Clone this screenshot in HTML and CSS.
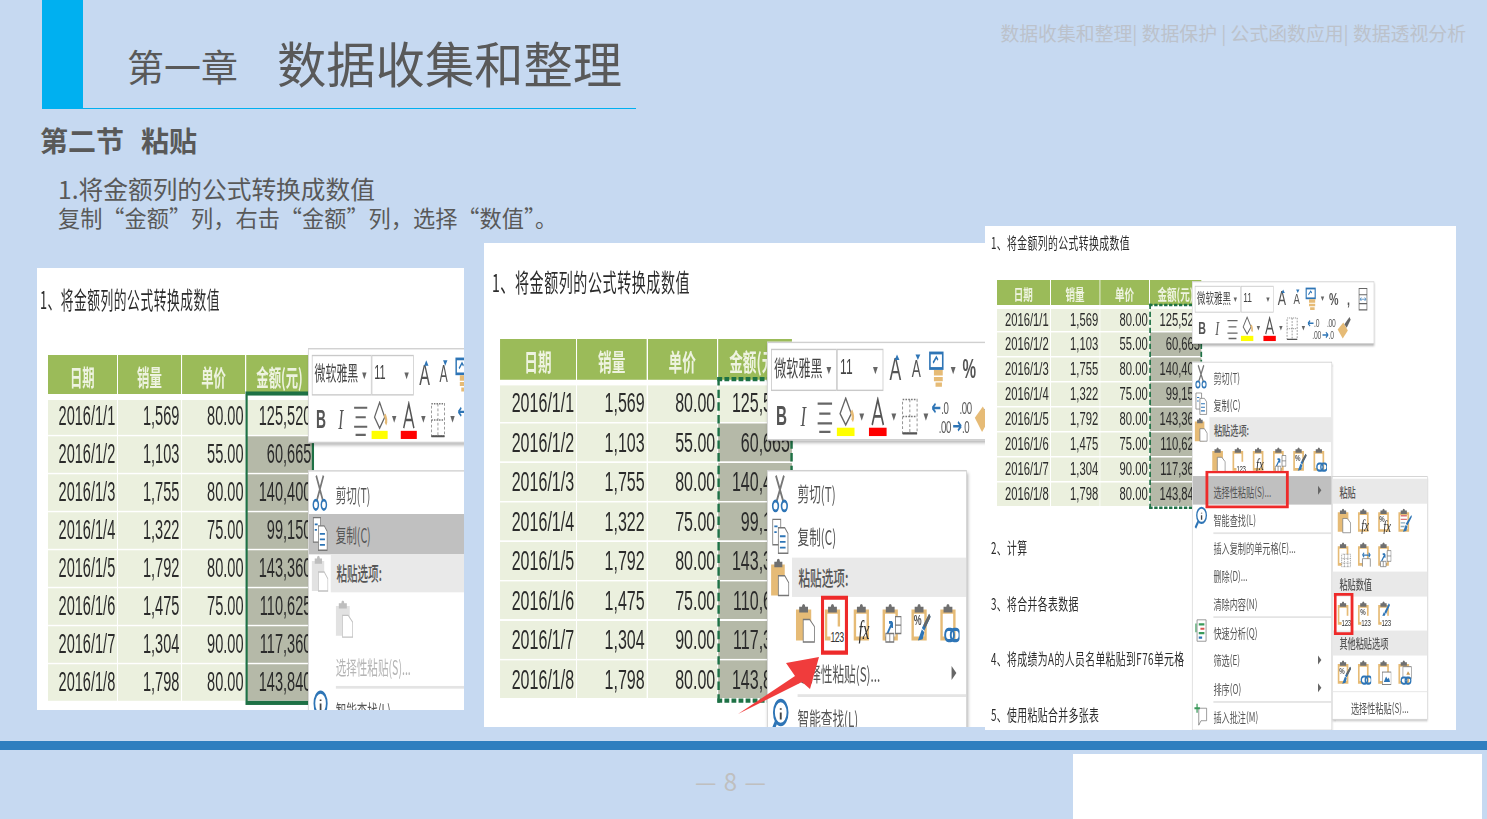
FILE: index.html
```html
<!DOCTYPE html>
<html lang="zh-CN">

<head>
    <meta charset="UTF-8">
    <meta name="viewport" content="width=device-width, initial-scale=1.0">
    <title>第一章 数据收集和整理</title>
    <link rel="stylesheet" href="styles.css">
</head>

<body>
    <svg class="defs" aria-hidden="true">
        <symbol id="p-clip" viewBox="0 0 25 29"><path d="M5 3h3.5a2 2 0 0 1 4 0H16v4H5z" fill="#6f6f6f"/></symbol>
        <symbol id="p-open" viewBox="0 0 25 29"><path fill-rule="evenodd" d="M1 5h19v22H1zM4 8v16h13V8z" fill="#e6bb76"/><use href="#p-clip"/></symbol>
        <symbol id="p-page" viewBox="0 0 25 29"><path d="M1 5h19v22H1z" fill="#e6bb76"/><use href="#p-clip"/><path d="M10 12h8l6 5v11H10z" fill="#fff" stroke="#777"/></symbol>
        <symbol id="p-123" viewBox="0 0 25 29"><use href="#p-open"/><rect x="8" y="17" width="17" height="12" fill="#fff"/><text x="8" y="28" class="ico-num">123</text></symbol>
        <symbol id="p-fx" viewBox="0 0 25 29"><use href="#p-open"/><text x="7" y="26" class="ico-fx">fx</text></symbol>
        <symbol id="p-swap" viewBox="0 0 25 29"><use href="#p-open"/><path d="M7 22l6-8M13 14h-4M13 14v4" stroke="#2e75b6" stroke-width="2" fill="none"/><path d="M17 10h7v12h-7zM17 16h7M5 22h10v6H5zM10 22v6" fill="#fff" stroke="#777"/></symbol>
        <symbol id="p-brush" viewBox="0 0 25 29"><use href="#p-open"/><text x="4" y="16" class="ico-pc">%</text><path d="M23 8l2 2-8 10-3-2zM14 19l3 2-2 5-6 1z" fill="#2e75b6"/><path d="M23 8l2 2-7 8-2-2z" fill="#666"/></symbol>
        <symbol id="p-link" viewBox="0 0 25 29"><use href="#p-open"/><rect x="7" y="19" width="11" height="8" rx="4" fill="#fff" stroke="#2e75b6" stroke-width="2.4"/><rect x="14" y="19" width="11" height="8" rx="4" fill="none" stroke="#2e75b6" stroke-width="2.4"/></symbol>
        <symbol id="p-pcfx" viewBox="0 0 25 29"><use href="#p-open"/><text x="3" y="16" class="ico-pc">%</text><text x="10" y="27" class="ico-fx">fx</text></symbol>
        <symbol id="p-format" viewBox="0 0 25 29"><use href="#p-open"/><path d="M5 9h11M5 13h11" stroke="#d77" stroke-width="1.5"/><path d="M5 17h8M5 21h7" stroke="#8ab" stroke-width="1.5"/><path d="M24 8l1 2-8 10-3-2zM14 19l3 2-2 5-6 1z" fill="#2e75b6"/></symbol>
        <symbol id="p-grid" viewBox="0 0 25 29"><use href="#p-open"/><path d="M8 14h16v14H8zM8 19h16M8 24h16M13 14v14M19 14v14" fill="#fff" stroke="#888" stroke-dasharray="1.5 1"/></symbol>
        <symbol id="p-width" viewBox="0 0 25 29"><use href="#p-open"/><path d="M9 28V19h14v9" fill="#fff" stroke="#777"/><path d="M9 15h14M9 15l3-2.5M9 15l3 2.5M23 15l-3-2.5M23 15l-3 2.5" stroke="#2e75b6" stroke-width="1.5" fill="none"/></symbol>
        <symbol id="p-pc123" viewBox="0 0 25 29"><use href="#p-open"/><text x="5" y="16" class="ico-pc">%</text><rect x="7" y="17" width="18" height="12" fill="#fff"/><text x="7" y="28" class="ico-num">123</text></symbol>
        <symbol id="p-br123" viewBox="0 0 25 29"><use href="#p-open"/><path d="M20 3l2 2-7 10-3-2zM11 13l3 2-2 3-5 1z" fill="#2e75b6"/><rect x="7" y="17" width="18" height="12" fill="#fff"/><text x="7" y="28" class="ico-num">123</text></symbol>
        <symbol id="p-pic" viewBox="0 0 25 29"><use href="#p-open"/><rect x="9" y="14" width="15" height="14" fill="#fff" stroke="#777"/><path d="M11 25l4-6 3 3 2-2 2 5z" fill="#2e75b6"/></symbol>
        <symbol id="p-piclink" viewBox="0 0 25 29"><use href="#p-open"/><rect x="9" y="8" width="15" height="13" fill="#fff" stroke="#777"/><path d="M15 17l3-4 4 4z" fill="#c79a55"/><rect x="6" y="20" width="10" height="7" rx="3.5" fill="#fff" stroke="#2e75b6" stroke-width="2.2"/><rect x="13" y="20" width="10" height="7" rx="3.5" fill="none" stroke="#2e75b6" stroke-width="2.2"/></symbol>

        <symbol id="m-cut" viewBox="0 0 24 28"><path d="M7 1l9 18M17 1L8 19" stroke="#777" stroke-width="2.2"/><circle cx="6.5" cy="22.5" r="3.5" fill="none" stroke="#2e75b6" stroke-width="2"/><circle cx="17.5" cy="22.5" r="3.5" fill="none" stroke="#2e75b6" stroke-width="2"/></symbol>
        <symbol id="m-copy" viewBox="0 0 24 28"><path d="M3 2h10v18H3z" fill="#fff" stroke="#777"/><path d="M10 8h8l4 4v14H10z" fill="#fff" stroke="#777"/><path d="M12 14h7M12 18h7M12 22h7M5 7h4M5 11h3" stroke="#2e75b6" stroke-width="1.3"/></symbol>
        <symbol id="m-paste" viewBox="0 0 24 28"><path d="M1 5h17v22H1z" fill="#e6bb76"/><path d="M5 3h3a2 2 0 0 1 4 0h3v4H5z" fill="#6f6f6f"/><path d="M10 13h8l5 5v9H10z" fill="#fff" stroke="#777"/></symbol>
        <symbol id="m-find" viewBox="0 0 24 28"><circle cx="13" cy="11" r="8.5" fill="#fff" stroke="#2e75b6" stroke-width="2.4"/><path d="M7 18l-5 7" stroke="#2e75b6" stroke-width="3.4"/><path d="M13 8v1M13 11v5" stroke="#444" stroke-width="2.4"/></symbol>
        <symbol id="m-quick" viewBox="0 0 24 28"><path d="M5 2h16v24H5z" fill="#fff" stroke="#777"/><path d="M8 7h10" stroke="#3a9a5b" stroke-width="2.5"/><path d="M11 12h7" stroke="#d9534f" stroke-width="2.5"/><path d="M8 17h10" stroke="#3a9a5b" stroke-width="2.5"/><path d="M8 22h6" stroke="#2e75b6" stroke-width="2.5"/><path d="M3 6v10" stroke="#3a9a5b" stroke-width="2"/></symbol>
        <symbol id="m-note" viewBox="0 0 24 28"><path d="M8 6h14v14H12l-4 5z" fill="#fff" stroke="#777"/><path d="M5 1v10M0 6h10" stroke="#3a9a5b" stroke-width="2.2"/></symbol>

        <symbol id="t-grow" viewBox="0 0 24 26"><path d="M15 3l3 4h-6z" fill="#2e75b6"/></symbol>
        <symbol id="t-shrink" viewBox="0 0 24 26"><path d="M12 3h6l-3 4z" fill="#2e75b6"/></symbol>
        <symbol id="t-cond" viewBox="0 0 26 28"><rect x="4" y="2" width="16" height="11" fill="#fff" stroke="#2e75b6" stroke-width="2"/><path d="M8 9l4-4 2 2" stroke="#2e75b6" stroke-width="1.6" fill="none"/><path d="M9 14h11v4H9zM9 19h11v3H9zM11 23h8v3h-8z" fill="#e6bb76"/></symbol>
        <symbol id="t-width" viewBox="0 0 26 28"><path d="M6 2h14v24H6zM6 9h14M6 19h14" fill="#fff" stroke="#666" stroke-width="1.3"/><path d="M8 14h10M8 14l2-2M8 14l2 2M18 14l-2-2M18 14l-2 2" stroke="#2e75b6" fill="none"/></symbol>
        <symbol id="t-align" viewBox="0 0 26 28"><path d="M4 5h18M6 12h14M4 19h18M6 25h14" stroke="#666" stroke-width="1.6"/></symbol>
        <symbol id="t-fill" viewBox="0 0 26 28"><path d="M13 1l7 11-7 8-7-8z" fill="#fff" stroke="#666" stroke-width="1.5"/><path d="M20 10c2 3 3 5 1 7" stroke="#e6bb76" stroke-width="3" fill="none"/><rect x="2" y="22" width="22" height="6" fill="#ffff00"/></symbol>
        <symbol id="t-color" viewBox="0 0 26 28"><path d="M6 20L13 2l7 18M8 14h10" stroke="#555" stroke-width="2" fill="none"/><rect x="2" y="22" width="22" height="6" fill="#ff0000"/></symbol>
        <symbol id="t-border" viewBox="0 0 26 28"><path d="M4 2h18v24H4zM4 14h18M13 2v24" fill="none" stroke="#777" stroke-dasharray="2 1.5"/><path d="M4 26h18" stroke="#555" stroke-width="1.5"/></symbol>
        <symbol id="t-dec-up" viewBox="0 0 26 28"><text x="12" y="12" class="ico-dec">.0</text><text x="9" y="26" class="ico-dec">.00</text><path d="M1 8h10M1 8l4-3M1 8l4 3" stroke="#2e75b6" stroke-width="1.7" fill="none"/></symbol>
        <symbol id="t-dec-down" viewBox="0 0 26 28"><text x="9" y="12" class="ico-dec">.00</text><text x="12" y="26" class="ico-dec">.0</text><path d="M1 21h10M11 21l-4-3M11 21l-4 3" stroke="#2e75b6" stroke-width="1.7" fill="none"/></symbol>
        <symbol id="t-brush" viewBox="0 0 26 28"><path d="M2 15l10-8 8 9-9 9z" fill="#e6bb76"/><path d="M14 9l9-8 2 3-7 9z" fill="#666"/></symbol>
    </svg>

    <div class="slide">
        <header class="top">
            <div class="top-row">
                <div class="chapter">
                    <span class="chapter-no">第一章</span>
                    <h1>数据收集和整理</h1>
                </div>
                <nav class="nav">数据收集和整理| 数据保护 | 公式函数应用| 数据透视分析</nav>
            </div>
            <h2>第二节<span class="topic">粘贴</span></h2>
            <p class="lead">1.将金额列的公式转换成数值</p>
            <p class="sub">复制“金额”列，右击“金额”列，选择“数值”。</p>
        </header>

        <section class="shots">
            <!-- first capture: solid border, copy hovered, paste disabled -->
            <div class="shot shot-a">
                <div class="canvas">
                    <div class="sheet-title">1、将金额列的公式转换成数值</div>
                    <div class="sheet">
                        <table>
                            <thead><tr><th>日期</th><th>销量</th><th>单价</th><th>金额(元)</th></tr></thead>
                            <tbody>
                                <tr><td>2016/1/1</td><td>1,569</td><td>80.00</td><td class="first">125,520</td></tr>
                                <tr><td>2016/1/2</td><td>1,103</td><td>55.00</td><td>60,665</td></tr>
                                <tr><td>2016/1/3</td><td>1,755</td><td>80.00</td><td>140,400</td></tr>
                                <tr><td>2016/1/4</td><td>1,322</td><td>75.00</td><td>99,150</td></tr>
                                <tr><td>2016/1/5</td><td>1,792</td><td>80.00</td><td>143,360</td></tr>
                                <tr><td>2016/1/6</td><td>1,475</td><td>75.00</td><td>110,625</td></tr>
                                <tr><td>2016/1/7</td><td>1,304</td><td>90.00</td><td>117,360</td></tr>
                                <tr><td>2016/1/8</td><td>1,798</td><td>80.00</td><td>143,840</td></tr>
                            </tbody>
                        </table>
                        <div class="marquee solid"></div>
                    </div>
                    <div class="toolbar">
                        <div class="tb-row">
                            <div class="combo font">微软雅黑<i class="caret"></i></div>
                            <div class="combo size">11<i class="caret"></i></div>
                            <span class="tb big">A<svg><use href="#t-grow"/></svg></span>
                            <span class="tb small">A<svg><use href="#t-shrink"/></svg></span>
                            <svg class="tb-ico"><use href="#t-cond"/></svg><i class="caret"></i>
                            <span class="tb pc">%</span><span class="tb pc">,</span>
                            <svg class="tb-ico"><use href="#t-width"/></svg>
                        </div>
                        <div class="tb-row">
                            <b class="tb bold">B</b><i class="tb ital">I</i>
                            <svg class="tb-ico"><use href="#t-align"/></svg>
                            <svg class="tb-ico"><use href="#t-fill"/></svg><i class="caret"></i>
                            <svg class="tb-ico"><use href="#t-color"/></svg><i class="caret"></i>
                            <svg class="tb-ico"><use href="#t-border"/></svg><i class="caret"></i>
                            <svg class="tb-ico"><use href="#t-dec-up"/></svg>
                            <svg class="tb-ico"><use href="#t-dec-down"/></svg>
                            <svg class="tb-ico"><use href="#t-brush"/></svg>
                        </div>
                    </div>
                    <div class="menu off-paste">
                        <div class="item"><svg class="m-ico"><use href="#m-cut"/></svg>剪切(T)</div>
                        <div class="item hover"><svg class="m-ico"><use href="#m-copy"/></svg>复制(C)</div>
                        <div class="label"><svg class="m-ico"><use href="#m-paste"/></svg><span>粘贴选项:</span></div>
                        <div class="icons"><svg class="p"><use href="#p-page"/></svg></div>
                        <div class="item special">选择性粘贴(S)...</div>
                        <div class="item low sep"><svg class="m-ico"><use href="#m-find"/></svg>智能查找(L)</div>
                    </div>
                </div>
            </div>

            <!-- second capture: paste values marked with an arrow -->
            <div class="shot shot-b">
                <div class="canvas">
                    <div class="sheet-title">1、将金额列的公式转换成数值</div>
                    <div class="sheet">
                        <table>
                            <thead><tr><th>日期</th><th>销量</th><th>单价</th><th>金额(元)</th></tr></thead>
                            <tbody>
                                <tr><td>2016/1/1</td><td>1,569</td><td>80.00</td><td class="first">125,520</td></tr>
                                <tr><td>2016/1/2</td><td>1,103</td><td>55.00</td><td>60,665</td></tr>
                                <tr><td>2016/1/3</td><td>1,755</td><td>80.00</td><td>140,400</td></tr>
                                <tr><td>2016/1/4</td><td>1,322</td><td>75.00</td><td>99,150</td></tr>
                                <tr><td>2016/1/5</td><td>1,792</td><td>80.00</td><td>143,360</td></tr>
                                <tr><td>2016/1/6</td><td>1,475</td><td>75.00</td><td>110,625</td></tr>
                                <tr><td>2016/1/7</td><td>1,304</td><td>90.00</td><td>117,360</td></tr>
                                <tr><td>2016/1/8</td><td>1,798</td><td>80.00</td><td>143,840</td></tr>
                            </tbody>
                        </table>
                        <div class="marquee"></div>
                    </div>
                    <div class="toolbar">
                        <div class="tb-row">
                            <div class="combo font">微软雅黑<i class="caret"></i></div>
                            <div class="combo size">11<i class="caret"></i></div>
                            <span class="tb big">A<svg><use href="#t-grow"/></svg></span>
                            <span class="tb small">A<svg><use href="#t-shrink"/></svg></span>
                            <svg class="tb-ico"><use href="#t-cond"/></svg><i class="caret"></i>
                            <span class="tb pc">%</span><span class="tb pc">,</span>
                            <svg class="tb-ico"><use href="#t-width"/></svg>
                        </div>
                        <div class="tb-row">
                            <b class="tb bold">B</b><i class="tb ital">I</i>
                            <svg class="tb-ico"><use href="#t-align"/></svg>
                            <svg class="tb-ico"><use href="#t-fill"/></svg><i class="caret"></i>
                            <svg class="tb-ico"><use href="#t-color"/></svg><i class="caret"></i>
                            <svg class="tb-ico"><use href="#t-border"/></svg><i class="caret"></i>
                            <svg class="tb-ico"><use href="#t-dec-up"/></svg>
                            <svg class="tb-ico"><use href="#t-dec-down"/></svg>
                            <svg class="tb-ico"><use href="#t-brush"/></svg>
                        </div>
                    </div>
                    <div class="menu">
                        <div class="item"><svg class="m-ico"><use href="#m-cut"/></svg>剪切(T)</div>
                        <div class="item"><svg class="m-ico"><use href="#m-copy"/></svg>复制(C)</div>
                        <div class="label"><svg class="m-ico"><use href="#m-paste"/></svg><span>粘贴选项:</span></div>
                        <div class="icons">
                            <svg class="p"><use href="#p-page"/></svg>
                            <span class="marked"><svg class="p"><use href="#p-123"/></svg></span>
                            <svg class="p"><use href="#p-fx"/></svg>
                            <svg class="p"><use href="#p-swap"/></svg>
                            <svg class="p"><use href="#p-brush"/></svg>
                            <svg class="p"><use href="#p-link"/></svg>
                        </div>
                        <div class="item special">选择性粘贴(S)...<i class="arrow-r"></i></div>
                        <div class="item low sep"><svg class="m-ico"><use href="#m-find"/></svg>智能查找(L)</div>
                    </div>
                </div>
                <svg class="red-arrow" viewBox="0 0 82 60"><path d="M0 59L57 21 48 8 81 2 72 34 64 27z"/></svg>
            </div>

            <!-- third capture: full menu with the paste special submenu -->
            <div class="shot shot-c">
                <div class="canvas">
                    <div class="sheet-title">1、将金额列的公式转换成数值</div>
                    <div class="sheet">
                        <table>
                            <thead><tr><th>日期</th><th>销量</th><th>单价</th><th>金额(元)</th></tr></thead>
                            <tbody>
                                <tr><td>2016/1/1</td><td>1,569</td><td>80.00</td><td class="first">125,520</td></tr>
                                <tr><td>2016/1/2</td><td>1,103</td><td>55.00</td><td>60,665</td></tr>
                                <tr><td>2016/1/3</td><td>1,755</td><td>80.00</td><td>140,400</td></tr>
                                <tr><td>2016/1/4</td><td>1,322</td><td>75.00</td><td>99,150</td></tr>
                                <tr><td>2016/1/5</td><td>1,792</td><td>80.00</td><td>143,360</td></tr>
                                <tr><td>2016/1/6</td><td>1,475</td><td>75.00</td><td>110,625</td></tr>
                                <tr><td>2016/1/7</td><td>1,304</td><td>90.00</td><td>117,360</td></tr>
                                <tr><td>2016/1/8</td><td>1,798</td><td>80.00</td><td>143,840</td></tr>
                            </tbody>
                        </table>
                        <div class="marquee"></div>
                    </div>
                    <ul class="steps">
                        <li>2、计算</li>
                        <li>3、将合并各表数据</li>
                        <li>4、将成绩为A的人员名单粘贴到F76单元格</li>
                        <li>5、使用粘贴合并多张表</li>
                    </ul>
                    <div class="toolbar">
                        <div class="tb-row">
                            <div class="combo font">微软雅黑<i class="caret"></i></div>
                            <div class="combo size">11<i class="caret"></i></div>
                            <span class="tb big">A<svg><use href="#t-grow"/></svg></span>
                            <span class="tb small">A<svg><use href="#t-shrink"/></svg></span>
                            <svg class="tb-ico"><use href="#t-cond"/></svg><i class="caret"></i>
                            <span class="tb pc">%</span><span class="tb pc">,</span>
                            <svg class="tb-ico"><use href="#t-width"/></svg>
                        </div>
                        <div class="tb-row">
                            <b class="tb bold">B</b><i class="tb ital">I</i>
                            <svg class="tb-ico"><use href="#t-align"/></svg>
                            <svg class="tb-ico"><use href="#t-fill"/></svg><i class="caret"></i>
                            <svg class="tb-ico"><use href="#t-color"/></svg><i class="caret"></i>
                            <svg class="tb-ico"><use href="#t-border"/></svg><i class="caret"></i>
                            <svg class="tb-ico"><use href="#t-dec-up"/></svg>
                            <svg class="tb-ico"><use href="#t-dec-down"/></svg>
                            <svg class="tb-ico"><use href="#t-brush"/></svg>
                        </div>
                    </div>
                    <div class="menu">
                        <div class="item"><svg class="m-ico"><use href="#m-cut"/></svg>剪切(T)</div>
                        <div class="item"><svg class="m-ico"><use href="#m-copy"/></svg>复制(C)</div>
                        <div class="label"><svg class="m-ico"><use href="#m-paste"/></svg><span>粘贴选项:</span></div>
                        <div class="icons">
                            <svg class="p"><use href="#p-page"/></svg>
                            <svg class="p"><use href="#p-123"/></svg>
                            <svg class="p"><use href="#p-fx"/></svg>
                            <svg class="p"><use href="#p-swap"/></svg>
                            <svg class="p"><use href="#p-brush"/></svg>
                            <svg class="p"><use href="#p-link"/></svg>
                        </div>
                        <div class="item special open">选择性粘贴(S)...<i class="arrow-r"></i><span class="red-box"></span></div>
                        <div class="item low"><svg class="m-ico"><use href="#m-find"/></svg>智能查找(L)</div>
                        <div class="item low sep">插入复制的单元格(E)...</div>
                        <div class="item low">删除(D)...</div>
                        <div class="item low">清除内容(N)</div>
                        <div class="item low sep"><svg class="m-ico"><use href="#m-quick"/></svg>快速分析(Q)</div>
                        <div class="item low">筛选(E)<i class="arrow-r"></i></div>
                        <div class="item low">排序(O)<i class="arrow-r"></i></div>
                        <div class="item low sep"><svg class="m-ico"><use href="#m-note"/></svg>插入批注(M)</div>

                        <div class="submenu">
                            <div class="sub-label">粘贴</div>
                            <div class="sub-icons">
                                <svg class="p"><use href="#p-page"/></svg>
                                <svg class="p"><use href="#p-fx"/></svg>
                                <svg class="p"><use href="#p-pcfx"/></svg>
                                <svg class="p"><use href="#p-format"/></svg>
                            </div>
                            <div class="sub-icons">
                                <svg class="p"><use href="#p-grid"/></svg>
                                <svg class="p"><use href="#p-width"/></svg>
                                <svg class="p"><use href="#p-swap"/></svg>
                            </div>
                            <div class="sub-label">粘贴数值</div>
                            <div class="sub-icons">
                                <span class="marked"><svg class="p"><use href="#p-123"/></svg></span>
                                <svg class="p"><use href="#p-pc123"/></svg>
                                <svg class="p"><use href="#p-br123"/></svg>
                            </div>
                            <div class="sub-label">其他粘贴选项</div>
                            <div class="sub-icons">
                                <svg class="p"><use href="#p-brush"/></svg>
                                <svg class="p"><use href="#p-link"/></svg>
                                <svg class="p"><use href="#p-pic"/></svg>
                                <svg class="p"><use href="#p-piclink"/></svg>
                            </div>
                            <div class="sub-foot">选择性粘贴(S)...</div>
                        </div>
                    </div>
                </div>
            </div>
        </section>

        <div class="band"></div>

        <footer class="foot">
            <div class="pager">— 8 —</div>
            <div class="blank"></div>
        </footer>
    </div>
</body>

</html>
```

FILE: styles.css
```css
* {
    box-sizing: border-box;
}

body {
    margin: 0;
    background-color: #c6d9f1;
    font-family: "Noto Sans CJK SC", "Liberation Sans", sans-serif;
    color: #595959;
    overflow: hidden;
}

.defs {
    position: absolute;
    width: 0;
    height: 0;
}

.ico-num {
    font: 11px "Liberation Sans", sans-serif;
    letter-spacing: -0.7px;
    fill: #333;
}

.ico-fx {
    font: italic 19px "Liberation Serif", serif;
    fill: #333;
}

.ico-pc {
    font: bold 11px "Liberation Sans", sans-serif;
    fill: #555;
}

.ico-dec {
    font: 12px "Liberation Sans", sans-serif;
    letter-spacing: -0.5px;
    fill: #555;
}

.slide {
    width: 1487px;
    height: 819px;
    overflow: hidden;
}

/* header */
.top {
    height: 226px;
}

.top-row {
    display: flex;
    justify-content: space-between;
    align-items: flex-start;
}

.chapter {
    width: 594px;
    height: 109px;
    margin-left: 42px;
    padding-left: 85px;
    padding-bottom: 15px;
    display: flex;
    align-items: flex-end;
    gap: 39px;
    border-bottom: 1px solid #00b0f0;
    background: linear-gradient(to right, #00b0f0 41px, transparent 41px);
}

.chapter-no {
    margin-bottom: 3px;
    font-size: 37px;
    line-height: 48px;
}

.chapter h1 {
    margin: 0;
    font-size: 49.3px;
    font-weight: 400;
    line-height: 62px;
}

.nav {
    margin: 20px 21px 0 0;
    font-size: 18.85px;
    line-height: 26px;
    color: #bcc2cb;
}

.top h2 {
    margin: 11px 0 0 40px;
    font-size: 28px;
    line-height: 40px;
    font-weight: 700;
}

.topic {
    margin-left: 17px;
}

.lead {
    margin: 13px 0 0 58px;
    font-size: 24.7px;
    line-height: 30px;
}

.sub {
    margin: 0 0 0 58px;
    font-size: 22.2px;
    line-height: 28px;
}

/* screenshots */
.shots {
    display: flex;
    align-items: flex-start;
    height: 504px;
}

.shot {
    position: relative;
    flex: none;
    overflow: hidden;
    background: #fff;
}

.shot-a {
    width: 427px;
    height: 442px;
    margin: 42px 0 0 37px;
    --sx: 0.729;
    --sy: 1.357;
    --title-x: 4px;
    --title-lh: 46px;
    --table-y: 64px;
    --table-x: 13.7px;
    --tb-x: 371.7px;
    --tb-y: 58.5px;
    --menu-y: 149.4px;
}

.shot-b {
    width: 501px;
    height: 484px;
    margin: 17px 0 0 20px;
    --sx: 0.802;
    --sy: 1.41;
    --title-x: 10px;
    --title-lh: 55px;
    --table-y: 68px;
    --table-x: 18.7px;
    --tb-x: 353px;
    --tb-y: 70.4px;
    --menu-y: 160.5px;
}

.shot-c {
    width: 471px;
    height: 504px;
    --sx: 0.5625;
    --sy: 0.893;
    --title-x: 10.7px;
    --title-lh: 38px;
    --table-y: 59.7px;
    --table-x: 19.6px;
    --tb-x: 368px;
    --tb-y: 61.6px;
    --menu-y: 152.3px;
}

/* all three captures are the same sheet, squeezed differently */
.canvas {
    position: relative;
    width: 850px;
    height: 580px;
    transform: scale(var(--sx), var(--sy));
    transform-origin: 0 0;
    color: #2b2b2b;
}

.sheet-title {
    height: var(--table-y);
    padding-left: var(--title-x);
    font-size: 17.5px;
    line-height: var(--title-lh);
    letter-spacing: 0.7px;
}

.sheet {
    position: relative;
    width: 366px;
    margin-left: var(--table-x);
}

.sheet table {
    width: 366px;
    table-layout: fixed;
    border-collapse: collapse;
    font-family: "Liberation Sans", sans-serif;
    font-size: 20px;
}

.sheet th:nth-child(1),
.sheet td:nth-child(1) {
    width: 96px;
}

.sheet th:nth-child(2),
.sheet td:nth-child(2),
.sheet th:nth-child(3),
.sheet td:nth-child(3) {
    width: 88px;
}

.sheet th {
    height: 31px;
    padding: 2px 0 0;
    background: #9bbb59;
    border-left: 1px solid #fff;
    border-right: 1px solid #fff;
    border-bottom: 4px solid #fff;
    color: #eef3e0;
    font-family: "Noto Sans CJK SC", sans-serif;
    font-size: 17px;
    font-weight: 700;
    white-space: nowrap;
    overflow: hidden;
}

.sheet td {
    height: 28px;
    padding: 0 2.3px 0 0;
    background: #ebf0de;
    border: 1px solid #fff;
    text-align: right;
    white-space: nowrap;
    overflow: hidden;
}

.sheet td:nth-child(4) {
    background: #b5b9a8;
}

.sheet td.first {
    background: #ebf0de;
}

.marquee {
    position: absolute;
    left: 272px;
    top: 27px;
    width: 94px;
    bottom: -2px;
    border: 3px dashed #1e7145;
}

.marquee.solid {
    border-style: solid;
}

.steps {
    margin: 14px 0 0;
    padding: 0 0 0 var(--title-x);
    list-style: none;
    font-size: 17.5px;
    line-height: 62.4px;
    letter-spacing: 0.7px;
}

/* floating toolbar */
.toolbar {
    position: absolute;
    left: var(--tb-x);
    top: var(--tb-y);
    width: 324px;
    height: 70px;
    padding: 4px 0 0 4px;
    background: #fff;
    border: 1px solid #d0d0d0;
    box-shadow: 1px 2px 3px rgba(0, 0, 0, 0.3);
    color: #555;
}

.tb-row {
    display: flex;
    align-items: center;
    height: 30px;
    font-family: "Liberation Sans", sans-serif;
}

.tb-row + .tb-row {
    margin-top: 3px;
}

.combo {
    position: relative;
    height: 30px;
    border: 1.5px solid #c9c9c9;
    font-family: "Noto Sans CJK SC", sans-serif;
    font-size: 15px;
    line-height: 24px;
    padding-left: 3px;
    color: #444;
}

.combo .caret {
    position: absolute;
    right: 6px;
    top: 12px;
    margin: 0;
}

.font {
    width: 82px;
}

.size {
    width: 58px;
    margin-right: 2px;
    font-family: "Liberation Sans", sans-serif;
}

.caret {
    flex: none;
    width: 0;
    height: 0;
    margin: 0 4px;
    border-left: 3.5px solid transparent;
    border-right: 3.5px solid transparent;
    border-top: 5px solid #666;
}

.tb {
    position: relative;
    flex: none;
    width: 26px;
    text-align: center;
    font-style: normal;
    line-height: 28px;
}

.tb svg {
    position: absolute;
    left: 0;
    top: 0;
    width: 24px;
    height: 26px;
}

.big {
    font-size: 22px;
}

.small {
    font-size: 17px;
}

.pc {
    font-size: 19px;
    font-weight: 700;
}

.bold {
    font-size: 19px;
}

.ital {
    font-family: "Liberation Serif", serif;
    font-style: italic;
    font-size: 21px;
    width: 28px;
}

.tb-ico {
    flex: none;
    width: 26px;
    height: 28px;
}

/* context menu */
.menu {
    position: absolute;
    left: var(--tb-x);
    top: var(--menu-y);
    width: 249px;
    padding-top: 1px;
    background: #fff;
    border: 1px solid #d0d0d0;
    box-shadow: 1px 2px 3px rgba(0, 0, 0, 0.3);
    color: #555;
    font-size: 14.5px;
}

.item {
    position: relative;
    display: flex;
    align-items: center;
    height: 30px;
    padding-left: 37px;
}

.m-ico {
    position: absolute;
    left: 3px;
    top: 1px;
    width: 24px;
    height: 28px;
}

.hover {
    background: #c0c0c0;
}

.low {
    height: 31.5px;
}

.sep::before {
    content: "";
    position: absolute;
    left: 37px;
    right: 0;
    top: -1px;
    height: 2px;
    background: #e4e4e4;
}

.label {
    position: relative;
    height: 28px;
    margin-left: 30px;
    padding-left: 8px;
    background: #e9e9e9;
    line-height: 28px;
    font-weight: 500;
}

.label .m-ico {
    left: -27px;
    top: 0;
}

.icons {
    display: flex;
    align-items: center;
    gap: 11px;
    height: 38px;
    padding-left: 34px;
}

.p {
    display: block;
    flex: none;
    width: 25px;
    height: 29px;
}

.special {
    height: 32px;
}

.open {
    background: #c0c0c0;
}

.arrow-r {
    position: absolute;
    right: 18px;
    top: 50%;
    margin-top: -5px;
    border-top: 5px solid transparent;
    border-bottom: 5px solid transparent;
    border-left: 6px solid #666;
}

.off-paste .label .m-ico,
.off-paste .p {
    filter: grayscale(1);
    opacity: 0.45;
}

.off-paste .icons {
    padding-left: 36px;
}

.off-paste .special {
    color: #b5b5b5;
}

.shot-b .arrow-r {
    right: 12px;
}

/* red marks added by the slide's author */
.red-box {
    position: absolute;
    left: 23px;
    width: 148px;
    top: -6px;
    bottom: -4px;
    border: solid #ee2a2a;
    border-width: 3px 5px;
}

.marked {
    position: relative;
    display: block;
}

.marked::after {
    content: "";
    position: absolute;
    left: -4px;
    right: -5px;
    top: -5px;
    bottom: -8px;
    border: solid #ee2a2a;
    border-width: 3px 4px;
}

.shot-c .marked::after {
    left: -6px;
    right: -4px;
    top: -8px;
    bottom: -9px;
    border-width: 3px 5px;
}

.red-arrow {
    position: absolute;
    left: 254px;
    top: 412px;
    width: 82px;
    height: 60px;
    fill: #f03c3c;
}

/* submenu */
.submenu {
    position: absolute;
    left: 248px;
    top: 127px;
    width: 170px;
    height: 273px;
    padding-top: 2px;
    background: #fff;
    border: 1px solid #d0d0d0;
    box-shadow: 1px 2px 3px rgba(0, 0, 0, 0.3);
}

.sub-label {
    height: 28px;
    padding-left: 12px;
    background: #e9e9e9;
    line-height: 28px;
    font-weight: 500;
}

.sub-icons {
    display: flex;
    align-items: center;
    gap: 11px;
    height: 38px;
    padding-left: 8px;
}

.sub-icons .p {
    height: 30px;
}

.sub-foot {
    height: 34px;
    margin-top: 2px;
    border-top: 1px solid #e4e4e4;
    text-align: center;
    line-height: 34px;
}

/* bottom */
.band {
    height: 9px;
    margin-top: 11px;
    background: #2e7ebf;
}

.foot {
    display: flex;
    align-items: flex-start;
}

.pager {
    margin: 18px 0 0 695px;
    font-size: 24px;
    line-height: 26px;
    word-spacing: 2px;
    color: #bfbfbf;
}

.blank {
    width: 409px;
    height: 65px;
    margin: 4px 5px 0 auto;
    background: #fff;
}
```
